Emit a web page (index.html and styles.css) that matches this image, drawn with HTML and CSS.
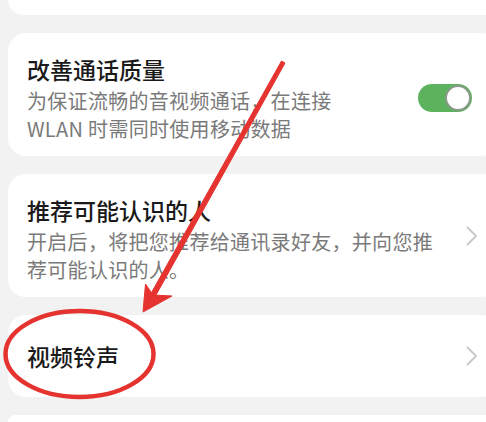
FILE: index.html
```html
<!DOCTYPE html>
<html lang="zh-CN">
<head>
    <meta charset="UTF-8">
    <meta name="viewport" content="width=device-width, initial-scale=1.0">
    <title>通话设置</title>
    <link rel="stylesheet" href="styles.css">
</head>
<body>

    <!-- Settings list -->
    <div class="list">
        <div class="card card-stub"></div>

        <div class="card item">
            <div class="item-text narrow">
                <div class="item-title">改善通话质量</div>
                <div class="item-desc">为保证流畅的音视频通话，在连接 WLAN 时需同时使用移动数据</div>
            </div>
            <div class="switch on"><span class="knob"></span></div>
        </div>

        <div class="card item">
            <div class="item-text">
                <div class="item-title">推荐可能认识的人</div>
                <div class="item-desc">开启后，将把您推荐给通讯录好友，并向您推荐可能认识的人。</div>
            </div>
            <svg class="chevron" viewBox="0 0 12 20"><polyline points="1.5,1.5 10,10 1.5,18.5"/></svg>
        </div>

        <div class="card item single">
            <div class="item-text">
                <div class="item-title">视频铃声</div>
            </div>
            <svg class="chevron" viewBox="0 0 12 20"><polyline points="1.5,1.5 10,10 1.5,18.5"/></svg>
        </div>

        <div class="card card-stub"></div>
    </div>

    <!-- Red annotation drawn on top -->
    <svg class="annotation" viewBox="0 0 486 422">
        <polygon class="ink" points="281.5,61 285,63 153.5,299.5 149,297"/>
        <polygon class="ink" points="143,312 145.5,284 153,295 172,296"/>
        <ellipse class="ring" cx="79.5" cy="354" rx="74" ry="43"/>
    </svg>

</body>
</html>
```

FILE: styles.css
```css
body, html {
    margin: 0;
    padding: 0;
    width: 100%;
    height: 100%;
    overflow: hidden;
}

body {
    position: relative;
    background: #f2f2f2;
    font-family: "Noto Sans CJK SC", "Noto Sans", sans-serif;
}

.list {
    display: flex;
    flex-direction: column;
    gap: 18px;
    padding-left: 8px;
    margin-right: -14px;
}

.card {
    background: #fff;
    border-radius: 18px;
}

.card-stub {
    height: 15px;
    border-radius: 0 0 18px 18px;
}

.list .card-stub:last-child {
    height: 7px;
    border-radius: 18px 18px 0 0;
}

.item {
    display: flex;
    align-items: center;
    padding: 20px 22px 13px 19px;
}

.item.single {
    padding-top: 25px;
    padding-bottom: 25px;
}

.item-text {
    flex: 1;
    min-width: 0;
    margin-right: 24px;
}

.item-text.narrow {
    flex: 0 1 332px;
    margin-right: auto;
}

.item-title {
    font-size: 23px;
    line-height: 32px;
    font-weight: 500;
    color: #1a1a1a;
}

.item-desc {
    margin-top: 2px;
    font-size: 20px;
    line-height: 28px;
    letter-spacing: 0.3px;
    color: #7a7a7a;
}

.switch {
    position: relative;
    width: 54px;
    height: 28px;
    margin-right: 6px;
    border-radius: 14px;
    background: #5db35d;
}

.switch .knob {
    position: absolute;
    top: 1px;
    right: 1px;
    width: 22px;
    height: 22px;
    border-radius: 50%;
    background: #fff;
    border: 2px solid #8a9a8a;
}

.chevron {
    width: 12px;
    height: 20px;
    flex: none;
    margin-top: -6px;
}

.item.single .chevron {
    margin-top: 0;
}

.chevron polyline {
    fill: none;
    stroke: #c8c8c8;
    stroke-width: 1.8;
    stroke-linecap: round;
    stroke-linejoin: round;
}

.annotation {
    position: absolute;
    top: 0;
    left: 0;
    width: 486px;
    height: 422px;
    pointer-events: none;
}

.ink {
    fill: #e53330;
    stroke: #e53330;
    stroke-width: 1;
    stroke-linejoin: round;
}

.ring {
    fill: none;
    stroke: #e53330;
    stroke-width: 4.5;
}
```
